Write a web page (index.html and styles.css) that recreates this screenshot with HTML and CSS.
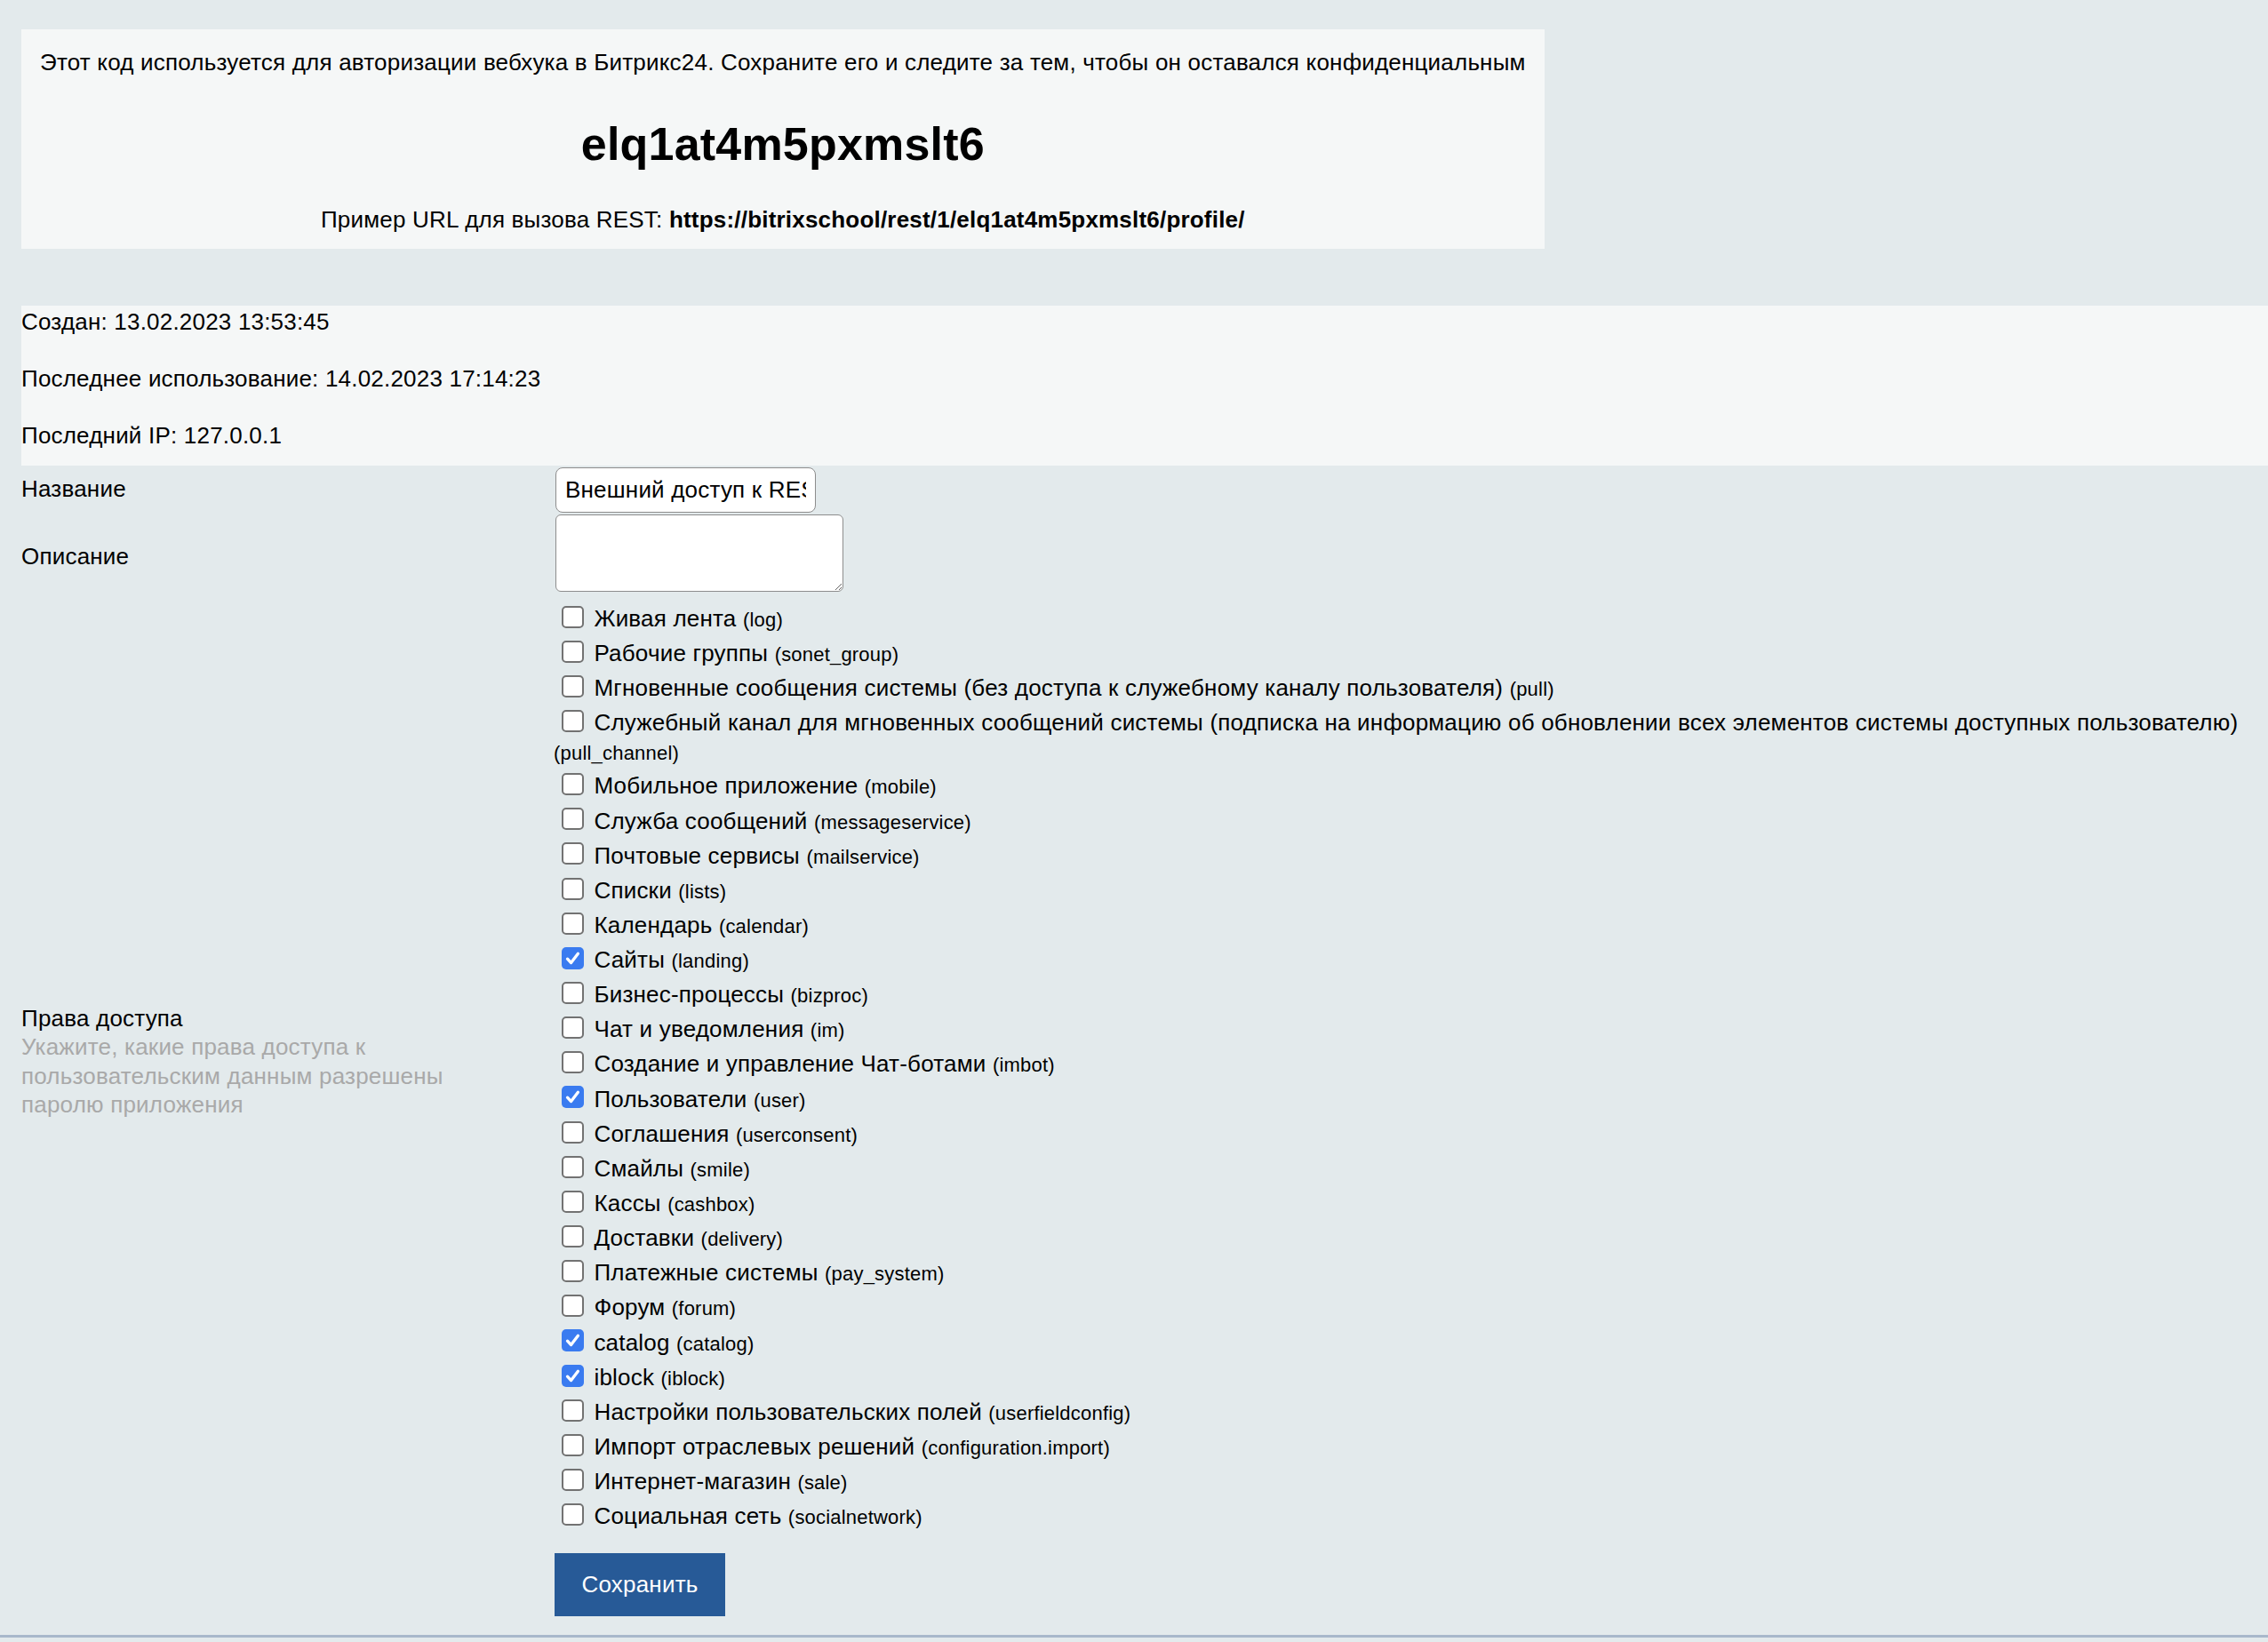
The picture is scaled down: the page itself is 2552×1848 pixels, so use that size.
FILE: index.html
```html
<!DOCTYPE html>
<html lang="ru">
<head>
<meta charset="utf-8">
<title>Вебхук</title>
<link rel="stylesheet" href="styles.css">
</head>
<body>
<div class="page">
  <div class="token-box">
    <p class="intro">Этот код используется для авторизации вебхука в Битрикс24. Сохраните его и следите за тем, чтобы он оставался конфиденциальным</p>
    <div class="token">elq1at4m5pxmslt6</div>
    <p class="example">Пример URL для вызова REST: <b>https://bitrixschool/rest/1/elq1at4m5pxmslt6/profile/</b></p>
  </div>

  <div class="info">
    <div class="info-row">Создан: 13.02.2023 13:53:45</div>
    <div class="info-row">Последнее использование: 14.02.2023 17:14:23</div>
    <div class="info-row">Последний IP: 127.0.0.1</div>
  </div>

  <form class="form">
    <div class="label">Название</div>
    <div class="field"><input class="text-input" type="text" value="Внешний доступ к REST"></div>

    <div class="label label-low">Описание</div>
    <div class="field"><textarea class="textarea"></textarea></div>

    <div class="label">
      <div class="label-title">Права доступа</div>
      <div class="hint">Укажите, какие права доступа к пользовательским данным разрешены паролю приложения</div>
    </div>
    <div class="field scopes">
      <div class="scope"><span class="cb"></span> Живая лента <span class="code">(log)</span></div>
      <div class="scope"><span class="cb"></span> Рабочие группы <span class="code">(sonet_group)</span></div>
      <div class="scope"><span class="cb"></span> Мгновенные сообщения системы (без доступа к служебному каналу пользователя) <span class="code">(pull)</span></div>
      <div class="scope"><span class="cb"></span> Служебный канал для мгновенных сообщений системы (подписка на информацию об обновлении всех элементов системы доступных пользователю) <span class="code">(pull_channel)</span></div>
      <div class="scope"><span class="cb"></span> Мобильное приложение <span class="code">(mobile)</span></div>
      <div class="scope"><span class="cb"></span> Служба сообщений <span class="code">(messageservice)</span></div>
      <div class="scope"><span class="cb"></span> Почтовые сервисы <span class="code">(mailservice)</span></div>
      <div class="scope"><span class="cb"></span> Списки <span class="code">(lists)</span></div>
      <div class="scope"><span class="cb"></span> Календарь <span class="code">(calendar)</span></div>
      <div class="scope"><span class="cb checked"><svg viewBox="0 0 25 25" width="25" height="25"><path d="M6.5 13.2 L10.6 17.6 L18.4 7.2" fill="none" stroke="#fff" stroke-width="3.3" stroke-linecap="round" stroke-linejoin="round"/></svg></span> Сайты <span class="code">(landing)</span></div>
      <div class="scope"><span class="cb"></span> Бизнес-процессы <span class="code">(bizproc)</span></div>
      <div class="scope"><span class="cb"></span> Чат и уведомления <span class="code">(im)</span></div>
      <div class="scope"><span class="cb"></span> Создание и управление Чат-ботами <span class="code">(imbot)</span></div>
      <div class="scope"><span class="cb checked"><svg viewBox="0 0 25 25" width="25" height="25"><path d="M6.5 13.2 L10.6 17.6 L18.4 7.2" fill="none" stroke="#fff" stroke-width="3.3" stroke-linecap="round" stroke-linejoin="round"/></svg></span> Пользователи <span class="code">(user)</span></div>
      <div class="scope"><span class="cb"></span> Соглашения <span class="code">(userconsent)</span></div>
      <div class="scope"><span class="cb"></span> Смайлы <span class="code">(smile)</span></div>
      <div class="scope"><span class="cb"></span> Кассы <span class="code">(cashbox)</span></div>
      <div class="scope"><span class="cb"></span> Доставки <span class="code">(delivery)</span></div>
      <div class="scope"><span class="cb"></span> Платежные системы <span class="code">(pay_system)</span></div>
      <div class="scope"><span class="cb"></span> Форум <span class="code">(forum)</span></div>
      <div class="scope"><span class="cb checked"><svg viewBox="0 0 25 25" width="25" height="25"><path d="M6.5 13.2 L10.6 17.6 L18.4 7.2" fill="none" stroke="#fff" stroke-width="3.3" stroke-linecap="round" stroke-linejoin="round"/></svg></span> catalog <span class="code">(catalog)</span></div>
      <div class="scope"><span class="cb checked"><svg viewBox="0 0 25 25" width="25" height="25"><path d="M6.5 13.2 L10.6 17.6 L18.4 7.2" fill="none" stroke="#fff" stroke-width="3.3" stroke-linecap="round" stroke-linejoin="round"/></svg></span> iblock <span class="code">(iblock)</span></div>
      <div class="scope"><span class="cb"></span> Настройки пользовательских полей <span class="code">(userfieldconfig)</span></div>
      <div class="scope"><span class="cb"></span> Импорт отраслевых решений <span class="code">(configuration.import)</span></div>
      <div class="scope"><span class="cb"></span> Интернет-магазин <span class="code">(sale)</span></div>
      <div class="scope"><span class="cb"></span> Социальная сеть <span class="code">(socialnetwork)</span></div>
    </div>

    <div class="label"></div>
    <div class="field"><button class="save" type="button">Сохранить</button></div>
  </form>
</div>
<div class="footer-line"></div>
</body>
</html>
```
FILE: styles.css
```css
html, body {
  margin: 0;
  padding: 0;
}
body {
  background: #e3eaec;
  font-family: "Liberation Sans", Arial, Helvetica, sans-serif;
  font-size: 26px;
  letter-spacing: 0.2px;
  color: #000;
}
.page {
  padding: 33px 0 0 24px;
}
.token-box {
  display: inline-block;
  background: #f5f7f7;
  padding: 22px 21px 18px;
  text-align: center;
}
.intro {
  margin: 0;
  line-height: 30px;
}
.token {
  margin-top: 47px;
  font-size: 52px;
  font-weight: bold;
  line-height: 60px;
}
.example {
  margin: 40px 0 0;
  line-height: 30px;
}
.info {
  margin-top: 64px;
  background: #f5f7f7;
  padding: 2px 0 18px;
}
.info-row {
  line-height: 32px;
}
.info-row + .info-row {
  margin-top: 32px;
}
.form {
  display: grid;
  grid-template-columns: 599px 1fr;
  align-items: center;
}
.label {
  line-height: 32.5px;
}
.label-low {
  padding-top: 10px;
}
.hint {
  color: #a9a9a9;
  max-width: 510px;
}
.text-input {
  display: block;
  box-sizing: border-box;
  margin: 2px 0 0 2px;
  width: 293px;
  height: 51px;
  padding: 0 10px;
  border: 1px solid #8d8d8d;
  border-radius: 8px;
  background: #fff;
  font: 26px "Liberation Sans", Arial, sans-serif;
  letter-spacing: 0.2px;
  color: #000;
}
.textarea {
  display: block;
  box-sizing: border-box;
  margin: 2px 0 0 2px;
  width: 324px;
  height: 87px;
  border: 1px solid #8d8d8d;
  border-radius: 6px;
  background: #fff;
  font: 26px "Liberation Sans", Arial, sans-serif;
}
.scopes {
  padding-top: 8px;
}
.scope {
  line-height: 31.8px;
}
.cb {
  display: inline-block;
  box-sizing: border-box;
  width: 25px;
  height: 25px;
  margin: 7.85px 4px 0 9px;
  border: 2px solid #727272;
  border-radius: 5px;
  background: #fff;
  vertical-align: -1.5px;
}
.cb svg {
  display: block;
}
.cb.checked {
  border: none;
  background: #3a7bf0;
}
.code {
  font-size: 22px;
  line-height: 1;
}
.save {
  display: block;
  margin: 25px 0 0 1px;
  width: 192px;
  height: 71px;
  border: none;
  border-radius: 0;
  background: #275a97;
  color: #fff;
  font: 26px "Liberation Sans", Arial, sans-serif;
  letter-spacing: 0.2px;
}
.footer-line {
  margin-top: 21px;
  height: 3px;
  background: #a8b8cb;
}
```
